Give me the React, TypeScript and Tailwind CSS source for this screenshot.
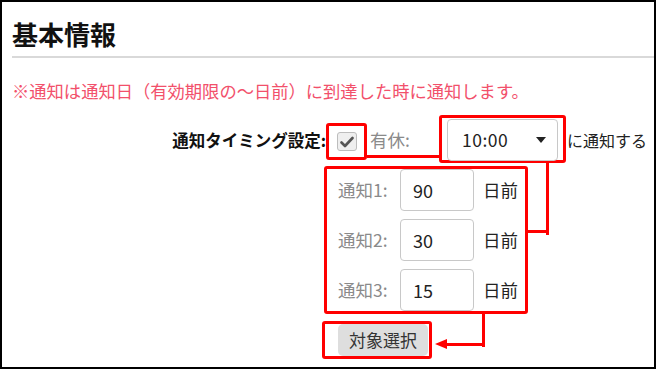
const jp = '"Noto Sans CJK JP", "Noto Sans", sans-serif';

const rows = [
  { label: '通知1:', value: '90' },
  { label: '通知2:', value: '30' },
  { label: '通知3:', value: '15' },
];

const App = () => {
  return (
    <div
      className="relative w-[656px] h-[369px] border-2 border-black bg-white text-[#333] overflow-hidden"
      style={{ fontFamily: jp }}
    >
      {/* タイトル */}
      <div className="mt-[19px] ml-[10px] h-[26px] text-[26px] leading-[26px] font-bold text-[#111]">基本情報</div>
      <div className="mt-[9px] ml-[10px] h-[2px] bg-[#d9d9d9]" />

      {/* 注意書き */}
      <div className="mt-[24px] ml-[10px] h-[18px] text-[17.3px] leading-[18px] text-[#f2506b] whitespace-nowrap">
        ※通知は通知日（有効期限の～日前）に到達した時に通知します。
      </div>

      {/* タイミング設定 */}
      <div className="mt-[15px] flex h-[48px]">
        <div className="w-[324px] pt-[16px] text-right text-[16.5px] leading-[18px] font-bold text-[#111] whitespace-nowrap">
          通知タイミング設定:
        </div>
        <div className="mt-[8px] w-[41px] h-[37px] border-[3px] border-[#ff0000] rounded-[3px] flex items-center justify-center">
          <div className="w-[20px] h-[19px] rounded-[3px] border border-[#bdbdbd] bg-[#efefef] flex items-center justify-center">
            <svg width="14" height="12" viewBox="0 0 14 12">
              <path d="M1.5 6.5 L5 10 L12.5 2" fill="none" stroke="#555" strokeWidth="2.6" strokeLinecap="round" strokeLinejoin="round" />
            </svg>
          </div>
        </div>
        <div className="w-[72px] pl-[3px] pt-[15px] text-[17.5px] leading-[20px] text-[#8a8a8a]">有休:</div>
        <div className="w-[127px] h-[48px] border-[3px] border-[#ff0000] rounded-[3px] pl-[5px] pt-[1px]">
          <div className="w-[111px] h-[42px] rounded-[4px] border border-[#c8c8c8] flex items-center pl-[14px] pr-[11px]">
            <span className="text-[17.5px] text-[#222] tracking-[0.5px]">10:00</span>
            <span className="ml-auto w-0 h-0 border-l-[5px] border-r-[5px] border-t-[6px] border-l-transparent border-r-transparent border-t-[#222]" />
          </div>
        </div>
        <div className="pl-[1px] pt-[15px] text-[16px] leading-[20px] text-[#222] whitespace-nowrap">に通知する</div>
      </div>

      {/* 通知日数 */}
      <div className="mt-[3px] ml-[322px] w-[204px] h-[148px] border-[3px] border-[#ff0000] rounded-[3px] pl-[11px] flex flex-col gap-[8px]">
        {rows.map(r => (
          <div key={r.label} className="flex items-center h-[42px]">
            <span className="w-[62px] text-[17.5px] text-[#8a8a8a] whitespace-nowrap">{r.label}</span>
            <div className="w-[74px] h-[42px] rounded-[4px] border border-[#c8c8c8] flex items-center pl-[12px] text-[18px] text-[#222]">
              {r.value}
            </div>
            <span className="ml-[9px] text-[17.5px] text-[#222]">日前</span>
          </div>
        ))}
      </div>

      {/* 対象選択 */}
      <div className="mt-[7px] ml-[320px] w-[110px] h-[38px] border-[3px] border-[#ff0000] rounded-[3px] pl-[13px] flex items-center">
        <button className="w-[90px] h-[32px] rounded-[5px] bg-[#dedede] text-[17px] text-[#333]">対象選択</button>
      </div>

      {/* 注釈の線 */}
      <div className="absolute left-[365px] top-[153px] w-[75px] h-[3px] bg-[#ff0000]" />
      <div className="absolute left-[544px] top-[161px] w-[3px] h-[72px] bg-[#ff0000]" />
      <div className="absolute left-[524px] top-[228px] w-[23px] h-[3px] bg-[#ff0000]" />
      <div className="absolute left-[480px] top-[312px] w-[3px] h-[33px] bg-[#ff0000]" />
      <div className="absolute left-[442px] top-[341px] w-[41px] h-[3px] bg-[#ff0000]" />
      <div className="absolute left-[433px] top-[337px] w-0 h-0 border-t-[5.5px] border-b-[5.5px] border-r-[12px] border-t-transparent border-b-transparent border-r-[#ff0000]" />
    </div>
  );
};

export default App;
